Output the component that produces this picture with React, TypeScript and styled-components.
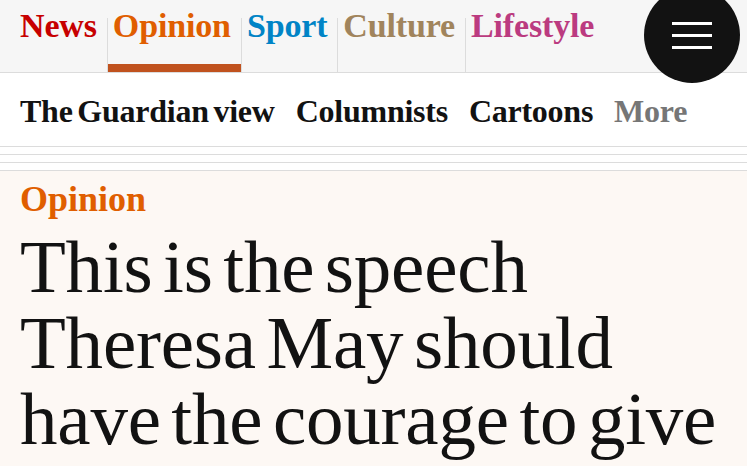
import React from "react";
import styled, { createGlobalStyle } from "styled-components";

const GlobalStyle = createGlobalStyle`
  html, body {
    margin: 0;
    padding: 0;
    background: #fdf8f4;
    overflow: hidden;
  }
  * { box-sizing: border-box; }
`;

const Page = styled.div`
  width: 747px;
  height: 466px;
  overflow: hidden;
  font-family: "Liberation Serif", "Times New Roman", serif;
  color: #121212;
  background: #fdf8f4;
`;

const Header = styled.header`
  position: relative;
  height: 73px;
  background: #f6f6f6;
  border-bottom: 1px solid #dcdcdc;
`;

const PillarList = styled.nav`
  display: flex;
  height: 72px;
  padding-left: 20px;
`;

const Pillar = styled.a<{ $color: string; $first?: boolean; $active?: boolean }>`
  display: block;
  height: 72px;
  padding: 7px 10px 0 ${(p) => (p.$first ? "0" : "6px")};
  font-size: 34px;
  line-height: 38px;
  font-weight: 700;
  letter-spacing: -0.15px;
  color: ${(p) => p.$color};
  text-decoration: none;
  background:
    ${(p) =>
      p.$first
        ? "none"
        : "linear-gradient(#dcdcdc, #dcdcdc) 0 18px / 1px 54px no-repeat"},
    ${(p) =>
      p.$active
        ? "linear-gradient(#c0521e, #c0521e) 1px 64px / calc(100% - 1px) 8px no-repeat"
        : "none"};
`;

const MenuButton = styled.button`
  position: absolute;
  top: -13px;
  right: 7px;
  z-index: 2;
  width: 96px;
  height: 96px;
  border: 0;
  border-radius: 50%;
  background: #121212;
  display: flex;
  flex-direction: column;
  align-items: center;
  justify-content: center;
  gap: 9px;
  padding: 0;
  padding-top: 1px;
`;

const MenuBar = styled.span`
  display: block;
  width: 40px;
  height: 3px;
  background: #ffffff;
`;

const SubNav = styled.nav`
  display: flex;
  gap: 21px;
  height: 74px;
  padding: 2px 20px 0;
  background: #ffffff;
  border-bottom: 1px solid #dcdcdc;
  align-items: center;
`;

const SubLink = styled.a<{ $muted?: boolean }>`
  font-size: 32px;
  font-weight: 700;
  word-spacing: -3px;
  letter-spacing: -0.25px;
  line-height: 1;
  color: ${(p) => (p.$muted ? "#767676" : "#121212")};
  text-decoration: none;
  white-space: nowrap;
`;

const Rules = styled.div`
  height: 24px;
  background: repeating-linear-gradient(
    to bottom,
    #ffffff 0,
    #ffffff 7px,
    #dcdcdc 7px,
    #dcdcdc 8px
  );
`;

const Article = styled.article`
  background: #fdf8f4;
  padding: 8px 10px 0 20px;
`;

const Kicker = styled.div`
  font-size: 36px;
  line-height: 40px;
  font-weight: 700;
  color: #e05e00;
  margin-bottom: 10px;
`;

const Headline = styled.h1`
  margin: 0;
  font-size: 75px;
  line-height: 76px;
  font-weight: 400;
  word-spacing: -8px;
  letter-spacing: -0.2px;
  color: #121212;
`;

const pillars = [
  { label: "News", color: "#c70000" },
  { label: "Opinion", color: "#e05e00", active: true },
  { label: "Sport", color: "#0084c6" },
  { label: "Culture", color: "#a1845c" },
  { label: "Lifestyle", color: "#bb3b80" },
];

const subLinks = ["The Guardian view", "Columnists", "Cartoons"];

export default function App() {
  return (
    <Page>
      <GlobalStyle />
      <Header>
        <PillarList>
          {pillars.map((p, i) => (
            <Pillar key={p.label} $color={p.color} $first={i === 0} $active={p.active}>
              {p.label}
            </Pillar>
          ))}
        </PillarList>
        <MenuButton aria-label="Show more">
          <MenuBar />
          <MenuBar />
          <MenuBar />
        </MenuButton>
      </Header>
      <SubNav>
        {subLinks.map((s) => (
          <SubLink key={s}>{s}</SubLink>
        ))}
        <SubLink $muted>More</SubLink>
      </SubNav>
      <Rules />
      <Article>
        <Kicker>Opinion</Kicker>
        <Headline>This is the speech Theresa May should have the courage to give</Headline>
      </Article>
    </Page>
  );
}
